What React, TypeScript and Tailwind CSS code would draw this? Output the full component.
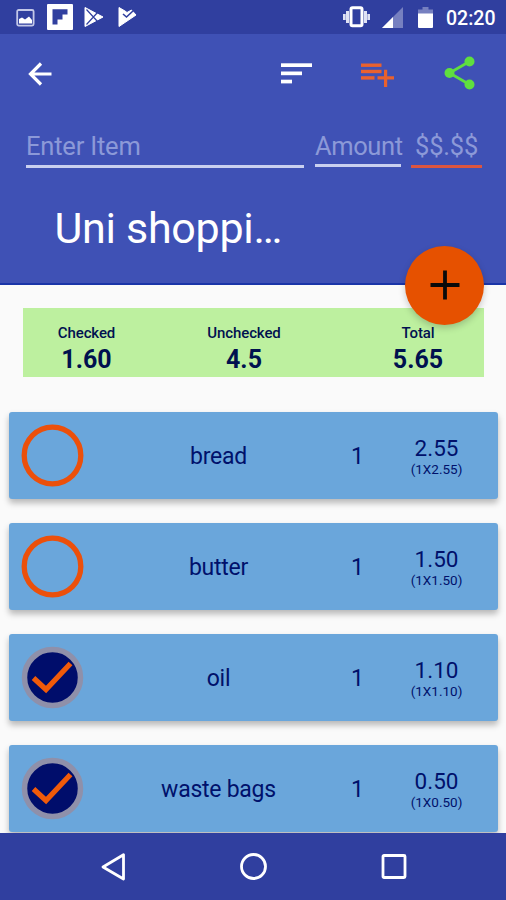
import React from "react";

type Item = { name: string; qty: number; price: string; checked: boolean };

const items: Item[] = [
  { name: "bread", qty: 1, price: "2.55", checked: false },
  { name: "butter", qty: 1, price: "1.50", checked: false },
  { name: "oil", qty: 1, price: "1.10", checked: true },
  { name: "waste bags", qty: 1, price: "0.50", checked: true },
];

function StatusBar() {
  return (
    <div className="flex h-[34px] shrink-0 items-center bg-[#303f9f] pl-4 pr-[10px]">
      <svg className="mt-px h-[18px] w-[19px]" viewBox="0 0 19 18">
        <rect x="1.2" y="1" width="16.4" height="15.6" rx="1.5" fill="none" stroke="#c3c8e8" strokeWidth="1.8" />
        <path d="M3 14.5V10l3-1.500 3 2 4-3 3 3.500V14.500z" fill="#fff" />
      </svg>
      <svg className="ml-3 h-[26px] w-[26px]" viewBox="0 0 26 26">
        <rect width="26" height="26" rx="1" fill="#fff" />
        <path d="M5.500 5.300H20.500V10.500H15.500V15.500H10.500V20.500H5.500z" fill="#303f9f" />
      </svg>
      <svg className="ml-[11px] h-5 w-5" viewBox="0 0 20 20">
        <path d="M1 0.500L19 10 1 19.500z" fill="#fff" stroke="#fff" strokeLinejoin="round" />
        <path d="M2.500 2.500L13.500 14.500M2.500 17.500L13.500 5.500" stroke="#303f9f" strokeWidth="1.200" fill="none" />
      </svg>
      <svg className="ml-[14px] h-5 w-[19px]" viewBox="0 0 19 20">
        <path d="M1 0.500L7 4 9 5.500 13.500 3 18 8 1 19.500z" fill="#fff" stroke="#fff" strokeLinejoin="round" />
        <path d="M5 7L8.500 10 15.500 3.500" stroke="#303f9f" strokeWidth="1.600" fill="none" />
      </svg>
      <svg className="ml-auto h-[22px] w-[27px]" viewBox="0 0 27 22">
        <path d="M1.200 8v6M4.500 5v12M25.800 8v6M22.500 5v12" stroke="#dfe2f4" strokeWidth="3" />
        <rect x="8" y="1.800" width="11" height="18" rx="1.500" fill="none" stroke="#fff" strokeWidth="3" />
      </svg>
      <svg className="ml-3 h-[21px] w-[21px]" viewBox="0 0 21 21">
        <path d="M0 21L21 0V21z" fill="#7680c0" />
        <path d="M0 21L11 10V21z" fill="#fff" />
      </svg>
      <svg className="ml-[15px] h-[21px] w-[15px]" viewBox="0 0 15 21">
        <path d="M4.500 0h6v2.500H15V7H0V2.500H4.500z" fill="#7680c0" />
        <path d="M0 6.500H15V20a1 1 0 0 1-1 1H1a1 1 0 0 1-1-1z" fill="#fff" />
      </svg>
      <span className="ml-[13px] mt-[3px] w-[50px] whitespace-nowrap text-[19.500px] font-medium leading-none text-white">02:20</span>
    </div>
  );
}

function Toolbar() {
  return (
    <div className="flex h-[79px] items-center pl-[28px] pr-[31px]">
      <svg className="h-6 w-6" viewBox="0 0 24 24" fill="none" stroke="#fff" strokeWidth="3.200">
        <path d="M23.500 12H3M13 1.500L2.500 12 13 22.500" />
      </svg>
      <svg className="ml-auto h-[22px] w-[31px]" viewBox="0 0 31 22" fill="#fff">
        <rect y="0.300" width="31" height="3.700" />
        <rect y="8.500" width="21" height="3.700" />
        <rect y="16.700" width="11" height="3.700" />
      </svg>
      <svg className="ml-[49px] mt-[3px] h-[26px] w-[34px]" viewBox="0 0 34 26" fill="#ea612e">
        <rect y="1.500" width="20.500" height="3.400" />
        <rect y="7.800" width="20.500" height="3.400" />
        <rect y="14.200" width="13.500" height="3.400" />
        <path d="M23 7.800h3.200v6.400H33v3.400H26.200V25H23V17.600H16.500V14.200H23z" />
      </svg>
      <svg className="ml-[49px] mt-[-1px] h-[34px] w-[31px]" viewBox="0 0 31 34">
        <path d="M25.500 5.500L5.500 17 25.500 28.500" fill="none" stroke="#5fdf3f" strokeWidth="2.800" />
        <g fill="#5fdf3f">
          <circle cx="25.500" cy="5.500" r="5" />
          <circle cx="5.500" cy="17" r="5" />
          <circle cx="25.500" cy="28.500" r="5" />
        </g>
      </svg>
    </div>
  );
}

function Header() {
  return (
    <header className="relative h-[251px] shrink-0 border-b-2 border-[#1a35a8] bg-[#3f51b5]">
      <Toolbar />
      <div className="flex items-start pl-[26px] text-[25.500px] leading-[30px] tracking-[-0.200px] text-[#8c99d8]">
        <div className="h-[55px] w-[278px] whitespace-nowrap border-b-[3px] border-[#c9d0f0] pt-[18px]">Enter Item</div>
        <div className="ml-[11px] h-[54px] w-[86px] whitespace-nowrap border-b-[3px] border-[#c9d0f0] pt-[18px] tracking-[-0.400px]">
          Amount
        </div>
        <div className="ml-[10px] h-[55px] w-[71px] whitespace-nowrap border-b-[3px] border-[#dc5540] pl-[4px] pt-[18px]">$$.$$</div>
      </div>
      <h1 className="whitespace-nowrap pl-[54.500px] pt-[34px] text-[43px] leading-[52px] tracking-[-0.300px] text-white">Uni shoppi…</h1>
      <button
        aria-label="Add item"
        className="absolute left-[405px] top-[211.500px] z-10 flex h-[79px] w-[79px] items-center justify-center rounded-full bg-[#e65100] shadow-[0_3px_7px_rgba(0,0,0,0.2)]"
      >
        <svg className="h-[30px] w-[30px]" viewBox="0 0 30 30" stroke="#0a0a0a" strokeWidth="3.800">
          <path d="M15 0.500V29.500M0.500 15H29.500" />
        </svg>
      </button>
    </header>
  );
}

function Total({ label, value, place }: { label: string; value: string; place: string }) {
  return (
    <div className={`flex flex-col items-center whitespace-nowrap pt-[15px] ${place}`}>
      <span className="text-[15px] font-medium leading-5 tracking-[-0.100px]">{label}</span>
      <span className="pt-[2px] text-[25px] font-bold leading-[30px]">{value}</span>
    </div>
  );
}

function CheckCircle({ checked }: { checked: boolean }) {
  return (
    <svg className="ml-3 h-[64px] w-[64px] shrink-0" viewBox="0 0 64 64">
      {checked ? (
        <>
          <circle cx="31.500" cy="31.500" r="28" fill="#000d6b" stroke="#8f90aa" strokeWidth="5.500" />
          <path d="M12.500 32L25 43.500 49.500 17.500" fill="none" stroke="#f05a0a" strokeWidth="5.300" />
        </>
      ) : (
        <circle cx="31.500" cy="31.500" r="28.300" fill="none" stroke="#ec500b" strokeWidth="5.300" />
      )}
    </svg>
  );
}

function Row({ item }: { item: Item }) {
  return (
    <li className="flex h-[87px] shrink-0 items-center rounded-[3px] bg-[#6aa6db] text-[#00116b] shadow-[0_4px_6px_rgba(0,0,0,0.27)]">
      <CheckCircle checked={item.checked} />
      <span className="w-[267px] whitespace-nowrap pt-[3px] text-center text-[23px] leading-[30px] tracking-[-0.250px]">{item.name}</span>
      <span className="ml-[-1px] w-[10px] shrink-0 pt-[3px] text-center text-[23px] leading-[30px]">{item.qty}</span>
      <span className="ml-[37px] flex w-[77px] flex-col items-center whitespace-nowrap">
        <span className="text-[22.500px] leading-[26px]">{item.price}</span>
        <span className="text-[13.500px] leading-4">{`(${item.qty}X${item.price})`}</span>
      </span>
    </li>
  );
}

export default function App() {
  return (
    <div className="flex h-[900px] w-[506px] flex-col overflow-hidden bg-[#fafafa] font-['Roboto',sans-serif]">
      <StatusBar />
      <Header />
      <main className="min-h-0 flex-1 overflow-hidden pt-[23px]">
        <section className="mx-auto flex h-[69px] w-[461px] bg-[#bdf09f] text-[#00114f]">
          <Total label="Checked" value="1.60" place="w-[128px]" />
          <Total label="Unchecked" value="4.5" place="w-[187px]" />
          <Total label="Total" value="5.65" place="ml-[15px] w-[131px]" />
        </section>
        <ul className="flex flex-col gap-6 pl-[9px] pr-2 pt-[35px]">
          {items.map((item) => (
            <Row key={item.name} item={item} />
          ))}
        </ul>
      </main>
      <nav className="flex h-[67px] shrink-0 items-center justify-between bg-[#303f9f] pl-[101px] pr-[99px]">
        <svg className="h-7 w-[25px]" viewBox="0 0 25 28" fill="none" stroke="#fff" strokeWidth="2.800" strokeLinejoin="round">
          <path d="M22.500 1.800V26L2 14z" />
        </svg>
        <svg className="h-7 w-7" viewBox="0 0 28 28" fill="none" stroke="#fff" strokeWidth="2.800">
          <circle cx="13.500" cy="13.500" r="12" />
        </svg>
        <svg className="h-[26px] w-[26px]" viewBox="0 0 26 26" fill="none" stroke="#fff" strokeWidth="2.800">
          <rect x="2" y="1.500" width="22" height="22" rx="1" />
        </svg>
      </nav>
    </div>
  );
}
